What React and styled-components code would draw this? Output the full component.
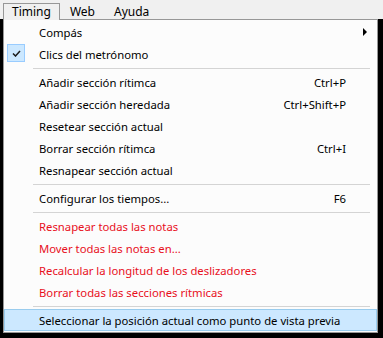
import { createGlobalStyle, styled } from "styled-components";

const GlobalStyle = createGlobalStyle`
  html, body {
    margin: 0;
    padding: 0;
    background: #000;
  }
  body {
    font-family: "Noto Sans", "DejaVu Sans", sans-serif;
    font-size: 11.3px;
  }
`;

const Page = styled.div`
  width: 383px;
  height: 338px;
  background: #000;
  overflow: hidden;
`;

const MenuBar = styled.div`
  display: flex;
  align-items: flex-end;
  height: 19px;
  background: #f0f0f0;
  padding-left: 3px;
`;

const MenuTab = styled.div`
  position: relative;
  z-index: 1;
  line-height: 15px;
  box-sizing: border-box;
  margin-bottom: ${(p) => (p.$open ? "-1px" : "0")};
  height: ${(p) => (p.$open ? "17px" : "16px")};
  padding: 0 ${(p) => p.$pr}px 0 ${(p) => p.$pl}px;
  border: 1px solid ${(p) => (p.$open ? "#979797" : "transparent")};
  border-bottom: none;
  background: #f0f0f0;
  color: #000;
  font-size: 12px;
`;

const Dropdown = styled.div`
  margin-left: 3px;
  width: 375px;
  box-sizing: border-box;
  border: 1px solid #979797;
  background: #fcfcfc;
  padding: 1px 0;
`;

const Item = styled.div`
  position: relative;
  display: flex;
  align-items: center;
  height: 22px;
  box-sizing: border-box;
  padding: 0 30px 0 34px;
  color: ${(p) => (p.$danger ? "#e8101c" : "#000")};
  background: ${(p) => (p.$active ? "#cce8ff" : "transparent")};
  border: 1px solid ${(p) => (p.$active ? "#99ccee" : "transparent")};
  white-space: nowrap;
`;

const Label = styled.span`
  flex: 1;
`;

const Shortcut = styled.span`
  color: #000;
`;

const CheckBox = styled.span`
  position: absolute;
  left: 2px;
  top: 0;
  width: 18px;
  height: 18px;
  box-sizing: border-box;
  background: #cce8ff;
  border: 1px solid #99ccff;
  display: flex;
  align-items: center;
  justify-content: center;
`;

const Arrow = styled.span`
  width: 0;
  height: 0;
  border-top: 4px solid transparent;
  border-bottom: 4px solid transparent;
  border-left: 4px solid #000;
  margin-right: -21px;
`;

const Separator = styled.div`
  height: 6px;
  display: flex;
  align-items: center;
  padding: 0 7px 0 29px;

  &::after {
    content: "";
    flex: 1;
    height: 1px;
    background: #d4d4d4;
  }
`;

const sections = [
  [
    { label: "Compás", submenu: true },
    { label: "Clics del metrónomo", checked: true },
  ],
  [
    { label: "Añadir sección rítimca", shortcut: "Ctrl+P" },
    { label: "Añadir sección heredada", shortcut: "Ctrl+Shift+P" },
    { label: "Resetear sección actual" },
    { label: "Borrar sección rítimca", shortcut: "Ctrl+I" },
    { label: "Resnapear sección actual" },
  ],
  [{ label: "Configurar los tiempos...", shortcut: "F6" }],
  [
    { label: "Resnapear todas las notas", danger: true },
    { label: "Mover todas las notas en...", danger: true },
    { label: "Recalcular la longitud de los deslizadores", danger: true },
    { label: "Borrar todas las secciones rítmicas", danger: true },
  ],
  [
    {
      label: "Seleccionar la posición actual como punto de vista previa",
      active: true,
    },
  ],
];

const App = () => {
  return (
    <Page>
      <GlobalStyle />
      <MenuBar>
        <MenuTab $open $pl={8} $pr={8}>
          Timing
        </MenuTab>
        <MenuTab $pl={9} $pr={9}>
          Web
        </MenuTab>
        <MenuTab $pl={8} $pr={8}>
          Ayuda
        </MenuTab>
      </MenuBar>
      <Dropdown>
        {sections.map((group, gi) => (
          <div key={gi}>
            {gi > 0 && <Separator />}
            {group.map((item) => (
              <Item key={item.label} $danger={item.danger} $active={item.active}>
                {item.checked && (
                  <CheckBox>
                    <svg width="9" height="7" viewBox="0 0 9 7">
                      <path
                        d="M1 3.5 L3.5 6 L8 1"
                        fill="none"
                        stroke="#1a1a1a"
                        strokeWidth="1.5"
                      />
                    </svg>
                  </CheckBox>
                )}
                <Label>{item.label}</Label>
                {item.shortcut && <Shortcut>{item.shortcut}</Shortcut>}
                {item.submenu && <Arrow />}
              </Item>
            ))}
          </div>
        ))}
      </Dropdown>
    </Page>
  );
};

export default App;
